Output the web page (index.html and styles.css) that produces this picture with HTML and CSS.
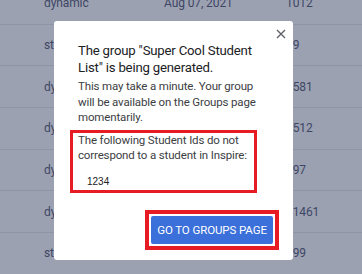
FILE: index.html
```html
<!DOCTYPE html>
<html lang="en">
<head>
    <meta charset="UTF-8">
    <meta name="viewport" content="width=device-width, initial-scale=1.0">
    <title>Groups</title>
    <link rel="stylesheet" href="styles.css">
</head>
<body>

    <div class="group-table">
        <div class="group-row"><span>dynamic</span><span>Aug 07, 2021</span><span>1012</span></div>
        <div class="group-row"><span>static</span><span>Aug 07, 2021</span><span>59</span></div>
        <div class="group-row"><span>dynamic</span><span>Aug 06, 2021</span><span>1581</span></div>
        <div class="group-row"><span>dynamic</span><span>Aug 06, 2021</span><span>1512</span></div>
        <div class="group-row"><span>dynamic</span><span>Aug 05, 2021</span><span>397</span></div>
        <div class="group-row"><span>dynamic</span><span>Aug 05, 2021</span><span>11461</span></div>
        <div class="group-row"><span>static</span><span>Aug 04, 2021</span><span>299</span></div>
    </div>

    <div class="modal">
        <button class="modal-close" aria-label="Close">
            <svg width="10" height="10" viewBox="0 0 10 10">
                <path d="M1 1 L9 9 M9 1 L1 9" stroke="#5f6368" stroke-width="1.4" fill="none"/>
            </svg>
        </button>
        <h2 class="modal-title">The group "Super Cool Student List" is being generated.</h2>
        <p class="modal-text">This may take a minute. Your group will be available on the Groups page momentarily.</p>
        <div class="missing-box">
            <p class="missing-text">The following Student Ids do not correspond to a student in Inspire:</p>
            <div class="missing-id">1234</div>
        </div>
        <div class="modal-actions">
            <div class="action-outline">
                <button class="primary-btn">GO TO GROUPS PAGE</button>
            </div>
        </div>
    </div>

</body>
</html>
```

FILE: styles.css
```css
body {
    margin: 0;
    background: #9ca1b1;
    font-family: 'Roboto', sans-serif;
    overflow: hidden;
}

.group-table {
    margin-top: -17px;
}

.group-row {
    display: grid;
    grid-template-columns: 120px 122px auto;
    align-items: center;
    height: 40.67px;
    padding-left: 44px;
    border-bottom: 1px solid #8f95a6;
    font-size: 12px;
    letter-spacing: -0.1px;
    color: #3e4665;
}

.modal {
    position: absolute;
    left: 54px;
    top: 21px;
    width: 239px;
    box-sizing: border-box;
    padding: 21px 24px 10px;
    background: #ffffff;
    border-radius: 3px;
    display: flex;
    flex-direction: column;
}

.modal-close {
    position: absolute;
    top: 8px;
    right: 7px;
    width: 10px;
    height: 10px;
    padding: 0;
    border: none;
    background: none;
    display: flex;
}

.modal-title {
    margin: 0;
    font-size: 13.2px;
    line-height: 17px;
    letter-spacing: -0.2px;
    font-weight: 400;
    color: #202124;
}

.modal-text {
    margin: 3px 0 0;
    font-size: 11.5px;
    line-height: 15.5px;
    letter-spacing: -0.15px;
    color: #3c4043;
}

.missing-box {
    margin: 4px 0 0 -8px;
    width: 187px;
    box-sizing: border-box;
    border: 3px solid #e61b24;
    padding: 0 0 2px 5px;
}

.missing-text {
    margin: 0;
    font-size: 11.5px;
    line-height: 15px;
    letter-spacing: -0.15px;
    color: #3c4043;
}

.missing-id {
    margin-top: 13px;
    padding-left: 9px;
    font-family: 'Liberation Sans', Arial, sans-serif;
    font-size: 10px;
    line-height: 12px;
    color: #202124;
}

.modal-actions {
    display: flex;
    justify-content: flex-end;
    margin: 17px -10px 0 0;
}

.action-outline {
    border: 4px solid #e61b24;
    padding: 2px;
    display: flex;
}

.primary-btn {
    width: 122px;
    height: 28px;
    padding: 0;
    border: none;
    border-radius: 2px;
    background: #3b6fd9;
    color: #ffffff;
    font-family: 'Roboto', sans-serif;
    font-size: 11.5px;
    letter-spacing: -0.1px;
    font-weight: 400;
}
```
